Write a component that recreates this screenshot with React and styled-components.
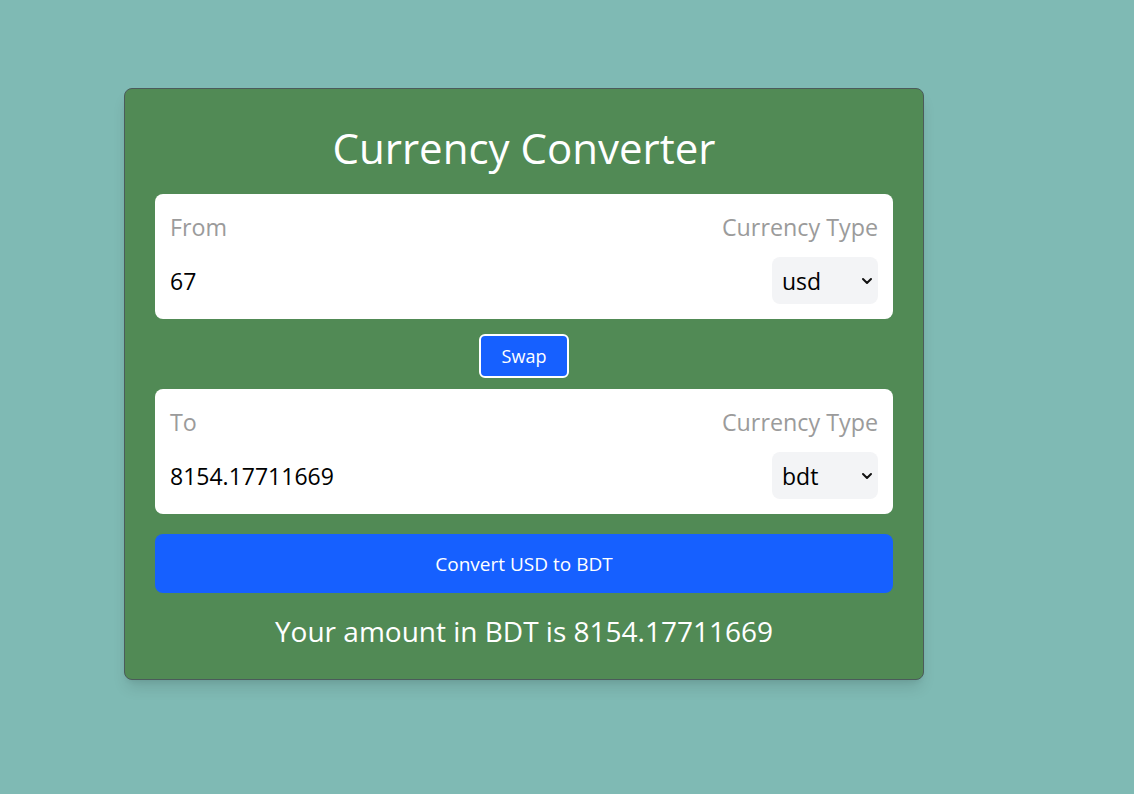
import React, { useState } from "react";
import styled, { createGlobalStyle } from "styled-components";
import { ChevronDown } from "lucide-react";

const Global = createGlobalStyle`
  html, body { margin: 0; padding: 0; }
  body {
    background: #7fbab4;
    font-family: "Open Sans", "Noto Sans", "Liberation Sans", sans-serif;
    min-height: 794px;
  }
  * { box-sizing: border-box; }
`;

const Page = styled.div`
  display: flex;
  align-items: flex-start;
  padding: 88px 0 0 124px;
`;

const Card = styled.div`
  width: 800px;
  background: #518a55;
  border: 1px solid #4b5b5a;
  border-radius: 8px;
  padding: 29px 30px 30px;
  box-shadow: 0 10px 15px -3px rgba(0, 0, 0, 0.12), 0 4px 6px -4px rgba(0, 0, 0, 0.1);
  display: flex;
  flex-direction: column;
  align-items: stretch;
`;

const Title = styled.h1`
  margin: 0 0 16px;
  font-size: 42px;
  line-height: 60px;
  font-weight: 400;
  color: #fff;
  text-align: center;
`;

const Box = styled.div`
  background: #fff;
  border-radius: 8px;
  padding: 15px;
  display: flex;
  flex-direction: column;
  gap: 14px;
`;

const Row = styled.div`
  display: flex;
  align-items: center;
  justify-content: space-between;
`;

const LabelRow = styled(Row)`
  padding-top: 2px;
`;

const Label = styled.label`
  font-size: 23.3px;
  line-height: 32px;
  color: #9b9b9b;
`;

const AmountInput = styled.input`
  border: none;
  outline: none;
  background: transparent;
  font-family: inherit;
  font-size: 23px;
  color: #000;
  padding: 0;
  width: 300px;
`;

const SelectWrap = styled.div`
  position: relative;
  width: 106px;
  height: 47px;
`;

const Select = styled.select`
  appearance: none;
  width: 100%;
  height: 100%;
  border: none;
  outline: none;
  border-radius: 8px;
  background: #f3f4f6;
  font-family: inherit;
  font-size: 23px;
  color: #000;
  padding: 0 0 0 10px;
`;

const Arrow = styled.span`
  position: absolute;
  right: 3px;
  top: 50%;
  transform: translateY(-50%);
  display: flex;
  pointer-events: none;
  color: #111;
`;

const SwapRow = styled.div`
  display: flex;
  justify-content: center;
  margin: 15px 0 11px;
`;

const SwapButton = styled.button`
  width: 90px;
  height: 44px;
  border: 2px solid #fff;
  border-radius: 6px;
  background: #1660ff;
  color: #fff;
  font-family: inherit;
  font-size: 18px;
  cursor: pointer;
`;

const ConvertButton = styled.button`
  margin-top: 20px;
  height: 59px;
  border: none;
  border-radius: 8px;
  background: #1660ff;
  color: #fff;
  font-family: inherit;
  font-size: 19px;
  cursor: pointer;
`;

const Result = styled.p`
  margin: 20px 0 0;
  text-align: center;
  font-size: 28px;
  line-height: 36px;
  color: #fff;
`;

function CurrencyBox({ label, amount, currency, onAmount, onCurrency }) {
  return (
    <Box>
      <LabelRow>
        <Label>{label}</Label>
        <Label>Currency Type</Label>
      </LabelRow>
      <Row>
        <AmountInput value={amount} onChange={(e) => onAmount && onAmount(e.target.value)} />
        <SelectWrap>
          <Select value={currency} onChange={(e) => onCurrency(e.target.value)}>
            <option value="usd">usd</option>
            <option value="bdt">bdt</option>
            <option value="eur">eur</option>
            <option value="inr">inr</option>
          </Select>
          <Arrow>
            <ChevronDown size={16} strokeWidth={3} />
          </Arrow>
        </SelectWrap>
      </Row>
    </Box>
  );
}

export default function App() {
  const [amount, setAmount] = useState("67");
  const [from, setFrom] = useState("usd");
  const [to, setTo] = useState("bdt");
  const converted = "8154.17711669";
  return (
    <>
      <Global />
      <Page>
        <Card>
          <Title>Currency Converter</Title>
          <CurrencyBox label="From" amount={amount} currency={from} onAmount={setAmount} onCurrency={setFrom} />
          <SwapRow>
            <SwapButton onClick={() => { setFrom(to); setTo(from); }}>Swap</SwapButton>
          </SwapRow>
          <CurrencyBox label="To" amount={converted} currency={to} onCurrency={setTo} />
          <ConvertButton>
            Convert {from.toUpperCase()} to {to.toUpperCase()}
          </ConvertButton>
          <Result>
            Your amount in {to.toUpperCase()} is {converted}
          </Result>
        </Card>
      </Page>
    </>
  );
}
